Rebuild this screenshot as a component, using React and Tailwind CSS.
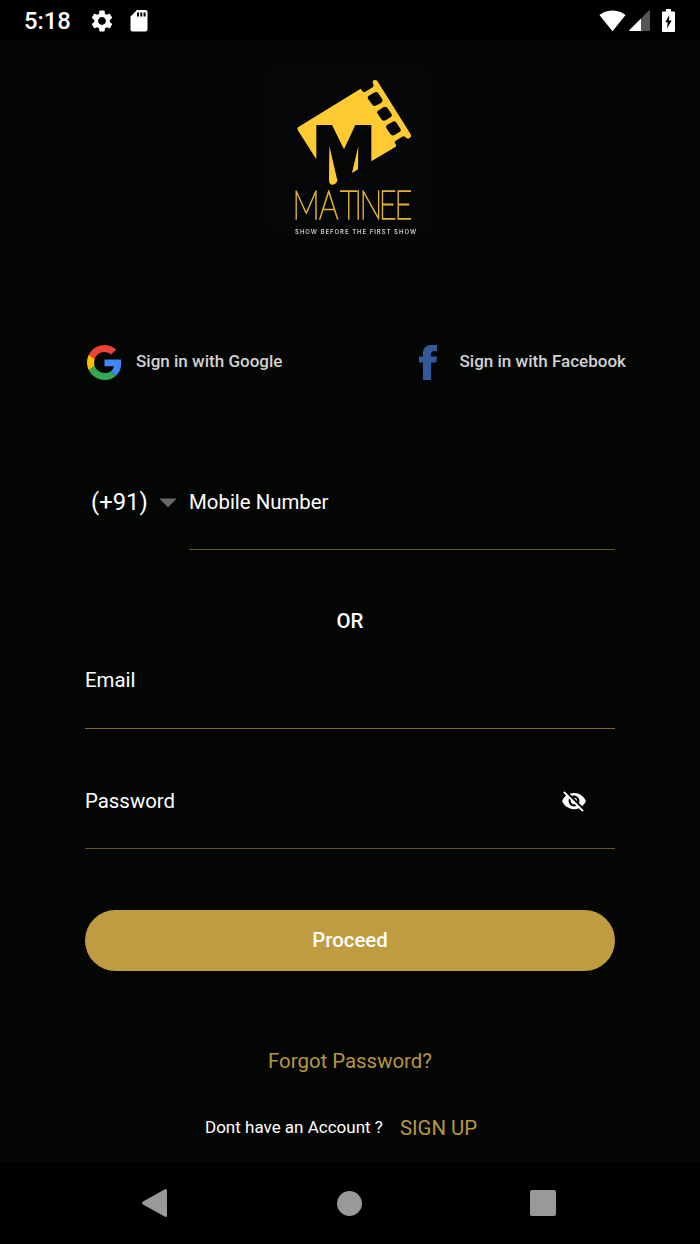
import { MdArrowDropDown, MdSettings, MdSignalWifi4Bar, MdVisibilityOff } from 'react-icons/md';

const StatusBar = () => (
  <header className="h-[41px] bg-black flex items-center pl-[24px] pr-[24px] text-white">
    <span className="text-[23.8px] leading-none font-medium mt-[2px]">5:18</span>
    <MdSettings className="w-[26px] h-[26px] ml-[18px]" />
    <svg className="w-[18px] h-[22px] ml-[15px]" viewBox="0 0 18 22">
      <path fill="#fff" fillRule="evenodd" d="M7 0h8.500q2 0 2 2v17.500q0 2-2 2h-13q-2 0-2-2V6.500zM7 2.500v4h2v-4zm3.300 0v4h2v-4zm3.300 0v4h2v-4z" />
    </svg>
    <MdSignalWifi4Bar className="w-[27px] h-[27px] ml-auto" />
    <svg className="w-[21px] h-[21px] ml-[3px]" viewBox="0 0 21 21">
      <path fill="#555" d="M21 1.200v18.300q0 1.500-1.500 1.500H12V8.500L19.500.7Q21-.3 21 1.200z" />
      <path fill="#fff" d="M12 8.500V21H1Q-.5 21 .6 19.700z" />
    </svg>
    <svg className="w-[13px] h-[23px] ml-[12px] mr-px" viewBox="0 0 13 23">
      <path fill="#fff" d="M4 0h5v2.500h3q1 0 1 1V22q0 1-1 1H1q-1 0-1-1V3.500q0-1 1-1h3z" />
      <path fill="#000" d="M7.300 6L3.300 13.200h2.400L5 19.500l4.700-8H7z" />
    </svg>
  </header>
);

const Logo = () => (
  <div className="w-[172px] h-[172px] mx-auto rounded-[10px] bg-[#040608]">
    <svg className="w-full h-full will-change-transform" viewBox="12 12 516 516">
      <g fill="#ffca32">
        <path
          fillRule="evenodd"
          d="M114 202L302 86L307 94Q311 98 316 95L338 82Q343 79 340 73L338 68Q337 64 341 61Q348 58 352 63L453 224Q455 229 449 234Q443 238 438 233Q434 227 429 229L407 242Q402 245 405 250L409 256L406 261L334 304V195H286L252 268L216 195H169V298L113 210Q111 205 114 202Z
          M326 107L342 98Q350 93 355 100L367 118Q370 124 364 128L350 136Q342 141 337 134L324 116Q321 111 326 107Z
          M354 152L370 142Q378 137 383 145L394 161Q398 168 391 172L377 181Q369 185 364 178L352 160Q349 155 354 152Z
          M381 195L397 186Q405 181 410 189L421 206Q425 212 418 216L404 225Q396 229 391 222L379 204Q376 199 381 195Z"
        />
        <path d="M208 258L232 361Q232 367 226 371Q216 377 210 371Q207 368 207 360Z" />
        <path d="M295 258L294 328L276 339Z" />
      </g>
      <text
        x="130 236 320 378 398 475 538"
        y="478"
        transform="scale(0.75 1)"
        fill="#dfb22f"
        stroke="#dfb22f"
        strokeWidth="4"
        className="font-['Lato'] font-thin text-[122px]"
      >
        MATINEE
      </text>
      <text
        x="105"
        y="521"
        fill="#c9c9c9"
        textLength="363"
        lengthAdjust="spacing"
        className="font-['Inter'] font-semibold text-[18px]"
      >
        SHOW BEFORE THE FIRST SHOW
      </text>
    </svg>
  </div>
);

const GoogleIcon = () => (
  <svg className="w-[35px] h-[35px]" viewBox="0 0 48 48">
    <path fill="#ea4335" d="M24 9.500c3.540 0 6.710 1.220 9.210 3.600l6.850-6.850C35.900 2.380 30.470 0 24 0 14.620 0 6.510 5.380 2.560 13.220l7.980 6.190C12.430 13.720 17.740 9.500 24 9.500z" />
    <path fill="#4285f4" d="M46.980 24.550c0-1.570-.15-3.090-.38-4.550H24v9.020h12.940c-.58 2.960-2.260 5.480-4.780 7.180l7.730 6c4.510-4.180 7.090-10.360 7.090-17.650z" />
    <path fill="#fbbc05" d="M10.530 28.590c-.48-1.450-.76-2.990-.76-4.590s.27-3.140.76-4.590l-7.980-6.190C.92 16.460 0 20.120 0 24c0 3.880.92 7.540 2.560 10.780l7.970-6.190z" />
    <path fill="#34a853" d="M24 48c6.480 0 11.930-2.130 15.890-5.810l-7.730-6c-2.150 1.450-4.920 2.300-8.160 2.300-6.260 0-11.570-4.220-13.470-9.910l-7.980 6.190C6.510 42.620 14.620 48 24 48z" />
  </svg>
);

const FacebookIcon = () => (
  <svg className="w-[18px] h-[35px]" viewBox="0 0 18 35">
    <path fill="#34599b" d="M4 35V17.500H0v-6h4V8.500C4 3 7 0 12.300 0H18v6.200h-3.500c-2 0-2.400 1-2.400 2.500v2.800H18l-.7 6h-5.200V35z" />
  </svg>
);

const App = () => {
  return (
    <div className="w-[700px] h-[1244px] flex flex-col bg-[#040603] text-white font-['Roboto',sans-serif] overflow-hidden">
      <StatusBar />

      <main className="flex-1 pt-[23px]">
        <Logo />

        <div className="mt-[108px] h-[36px] pl-[87px] flex items-center text-[17.05px] font-medium text-[#d2d2d2] whitespace-nowrap">
          <button className="w-[332px] flex items-center gap-[14px]">
            <GoogleIcon />
            Sign in with Google
          </button>
          <button className="flex items-center gap-[22.500px]">
            <FacebookIcon />
            Sign in with Facebook
          </button>
        </div>

        <form className="px-[85px] text-[20.4px]">
          <div className="flex mt-[92px] h-[78px]">
            <div className="w-[104px] h-[60px] pl-[6px] flex items-center">
              <span className="w-[63px] text-[23.8px] pt-px">(+91)</span>
              <MdArrowDropDown className="w-[42px] h-[42px] -ml-[5px] shrink-0 text-[#6a6a6a]" />
            </div>
            <div className="flex-1 h-[78px] border-b border-[#69521f]">
              <label className="flex h-[60px] items-center">Mobile Number</label>
            </div>
          </div>

          <div className="mt-[56px] h-[30px] leading-[30px] text-center font-medium">OR</div>

          <div className="mt-[14px] h-[79px] border-b border-[#84662a]">
            <label className="flex h-[60px] items-center">Email</label>
          </div>

          <div className="mt-[42px] h-[78px] border-b border-[#69521f]">
            <div className="flex h-[60px] items-center justify-between pr-[28px]">
              <label>Password</label>
              <MdVisibilityOff className="w-[26px] h-[26px]" />
            </div>
          </div>

          <button className="mt-[61px] w-full h-[61px] rounded-full bg-[#bf9c40] font-medium" type="button">
            Proceed
          </button>
        </form>

        <div className="mt-[75px] h-[30px] leading-[30px] text-center text-[20.4px] text-[#b8963d]">Forgot Password?</div>

        <div className="mt-[37px] h-[30px] pl-[205px] flex items-center gap-[17px] text-[17px]">
          <span>Dont have an Account ?</span>
          <span className="text-[20.4px] text-[#b8963d]">SIGN UP</span>
        </div>
      </main>

      <nav className="h-[82px] bg-black flex items-center justify-between pl-[142px] pr-[144px]">
        <svg className="w-[25px] h-[28px]" viewBox="0 0 25 28">
          <path fill="#999" d="M1 12.600L22.500.4Q25-.6 25 2v24q0 2.600-2.500 1.600L1 15.400q-2-1.400 0-2.800z" />
        </svg>
        <div className="w-[25px] h-[25px] rounded-full bg-[#999] ml-px" />
        <div className="w-[26px] h-[26px] rounded-[2px] bg-[#999]" />
      </nav>
    </div>
  );
};

export default App;
